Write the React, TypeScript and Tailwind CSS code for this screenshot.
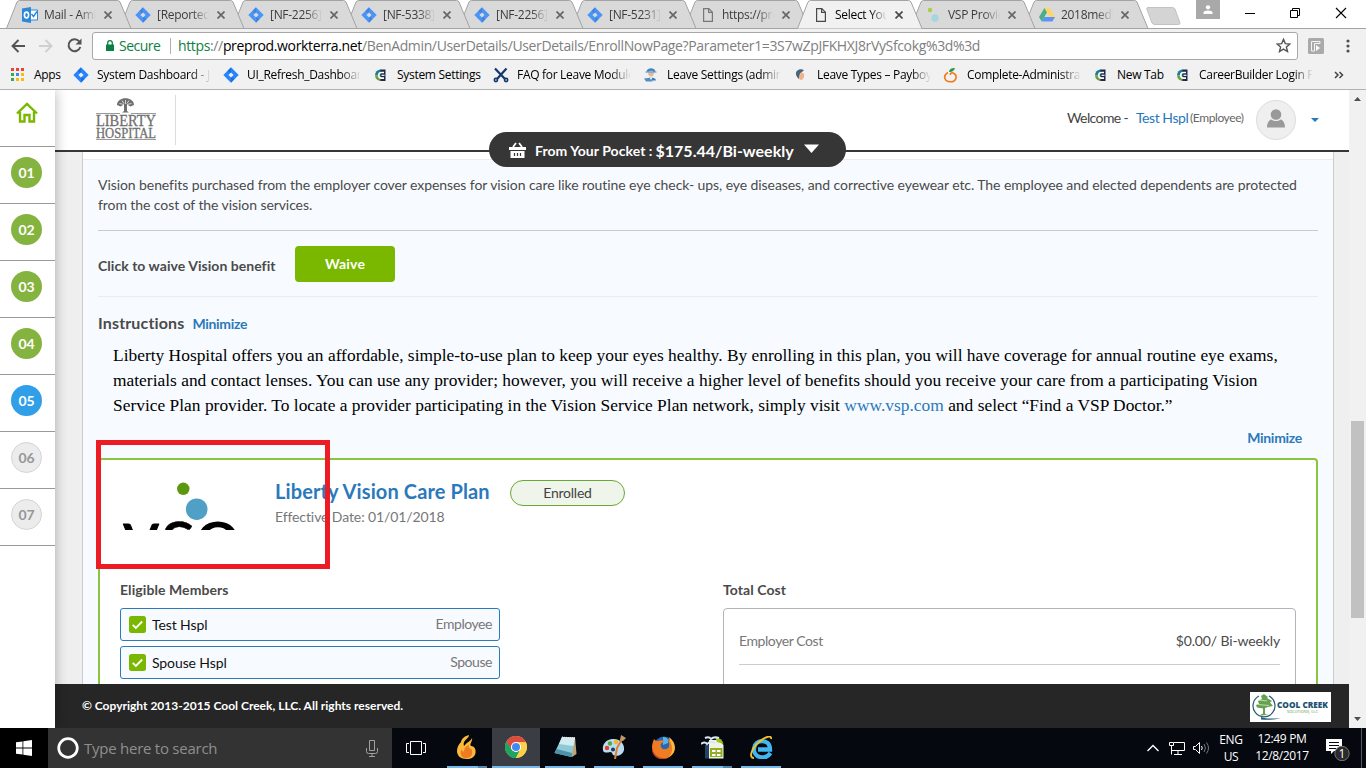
import type { ReactNode } from "react";

const uiFont = "font-['Open_Sans','Noto_Sans',sans-serif]";
const appFont = "font-['Lato',sans-serif]";

/* ---------- small icons ---------- */

const JiraIcon = ({ dim = false }: { dim?: boolean }) => (
  <svg width="16" height="16" viewBox="0 0 16 16" opacity={dim ? 0.8 : 1}>
    <path d="M8 0.3 15.7 8 8 15.7 0.3 8Z" fill="#2684ff" />
    <path d="M8 0.3 4.6 3.7 8 7.1V5Z" fill="#1558bc" opacity="0.5" />
    <path d="M8 15.7 11.4 12.3 8 9V11Z" fill="#1558bc" opacity="0.5" />
    <path d="M8 5.4 10.6 8 8 10.6 5.4 8Z" fill={dim ? "#d9d9d9" : "#f1f1f1"} />
  </svg>
);

const OutlookIcon = () => (
  <svg width="16" height="16" viewBox="0 0 16 16">
    <path d="M8 3h7.500v10H8z" fill="#fff" stroke="#2b88d8" />
    <path d="M9.500 7l2 2.500 3.500-5" stroke="#2b88d8" fill="none" strokeWidth="1.400" />
    <path d="M0 1.500 9 0v16L0 14.500Z" fill="#2b88d8" />
    <ellipse cx="4.500" cy="8" rx="2.100" ry="2.900" fill="none" stroke="#fff" strokeWidth="1.600" />
  </svg>
);

const PageIcon = ({ dim = false }: { dim?: boolean }) => (
  <svg width="16" height="16" viewBox="0 0 16 16" fill="none" stroke={dim ? "#777" : "#4a4a4a"} strokeWidth="1.200">
    <path d="M3.600 1.600h5.200l3.600 3.600v9.200H3.600z" />
    <path d="M8.600 1.800v3.600h3.600" />
  </svg>
);

const VspIcon = () => (
  <svg width="16" height="16" viewBox="0 0 16 16">
    <circle cx="4" cy="3" r="2.200" fill="#a5cf4c" />
    <circle cx="9" cy="11" r="3.700" fill="#a5d6de" />
  </svg>
);

const DriveIcon = () => (
  <svg width="16" height="16" viewBox="0 0 16 16">
    <path d="M5.400 1h5.200L16 10h-5.200Z" fill="#fdd663" />
    <path d="M5.400 1 8 5.400 2.700 14.600 0 10Z" fill="#4caf84" />
    <path d="M5.300 10H16l-2.600 4.600H2.700Z" fill="#5c93f5" />
  </svg>
);

const CbIcon = () => (
  <svg width="16" height="16" viewBox="0 0 16 16">
    <path d="M7 2.500h5.500v11.500H7z" fill="#1b2a49" />
    <path d="M7.500 2.500a5.800 5.800 0 0 0-5.500 6h5.500Z" fill="#1d7f94" />
    <path d="M2 8.500a5.800 5.800 0 0 0 5.500 5.500V8.500Z" fill="#6f9f45" />
    <path d="M11 5.500H8.500a2.800 2.800 0 0 0 0 5.600H11" fill="none" stroke="#fff" strokeWidth="1.600" />
    <path d="M8.500 8.300h3" stroke="#fff" strokeWidth="1.200" />
  </svg>
);

const ScissorsIcon = () => (
  <svg width="16" height="16" viewBox="0 0 16 16" stroke="#14386b" fill="none" strokeWidth="2.200">
    <path d="M2 1.500 12 12M13.500 1.500 4 12" />
    <circle cx="2.900" cy="13" r="1.600" strokeWidth="1.600" />
    <circle cx="13.100" cy="13" r="1.600" strokeWidth="1.600" />
  </svg>
);

const WorkerIcon = () => (
  <svg width="16" height="16" viewBox="0 0 16 16">
    <path d="M3.500 5c0-5 9-5 9 0Z" fill="#4187c7" />
    <circle cx="8" cy="6.600" r="2.800" fill="#e9b98d" />
    <path d="M2.500 4.500h11v1.200h-11z" fill="#6aa6da" />
    <path d="M3 13.500c0-4 10-4 10 0Z" fill="#3c7bb8" />
    <path d="M1 11.500 6 11l4 3.500H3Z" fill="#4f8fc9" />
    <path d="M6.500 10.500h3L8 13Z" fill="#fff" />
  </svg>
);

const PayIcon = () => (
  <svg width="16" height="16" viewBox="0 0 16 16">
    <path d="M11 3C6 1 2.500 4 3 7.500 3.500 10 5 11 6 12l1-5Z" fill="#47657b" />
    <path d="M7 6c3-1 5 1 4 4s-3 4-5 2Z" fill="#f0b48c" />
  </svg>
);

const OrangeIcon = () => (
  <svg width="16" height="16" viewBox="0 0 16 16" fill="none">
    <path d="M5 5.500C-1 9 2 15 7.500 14.800 13 15 15 9 11 6.500 9 5 7 6 7.500 8" stroke="#f07a1a" strokeWidth="1.600" />
    <path d="M6 5c0-3 3-4.500 6-4-1 3-3 4.500-6 4Z" fill="#2c9a4b" />
  </svg>
);

const CloseX = ({ active }: { active?: boolean }) => (
  <svg width="8" height="8" viewBox="0 0 8 8" stroke={active ? "#4a4a4a" : "#666"} strokeWidth="1.700">
    <path d="M0.500 0.500 7.500 7.500M7.500 0.500 0.500 7.500" />
  </svg>
);

/* ---------- browser chrome ---------- */

interface TabItem {
  title: string;
  icon: ReactNode;
  active?: boolean;
}

const tabs: TabItem[] = [
  { title: "Mail - Amit", icon: <OutlookIcon /> },
  { title: "[Reported", icon: <JiraIcon dim /> },
  { title: "[NF-2256]", icon: <JiraIcon dim /> },
  { title: "[NF-5338]", icon: <JiraIcon dim /> },
  { title: "[NF-2256]", icon: <JiraIcon dim /> },
  { title: "[NF-5231]", icon: <JiraIcon dim /> },
  { title: "https://pre", icon: <PageIcon dim /> },
  { title: "Select You", icon: <PageIcon />, active: true },
  { title: "VSP Provid", icon: <VspIcon /> },
  { title: "2018medi", icon: <DriveIcon /> },
];

const BrowserTab = ({ tab, index }: { tab: TabItem; index: number }) => (
  <div
    className="relative -ml-3 flex h-[29px] w-[125px] shrink-0 items-center pl-4 first:ml-0"
    style={{ zIndex: tab.active ? 20 : 12 - index }}
  >
    <svg className="absolute top-0 left-0" width="126" height="29" viewBox="0 0 126 29">
      <path
        d="M0.500 28.500 11 2Q12 0.500 13.500 0.500H111.500Q113 0.500 114 2L125 28.500"
        fill={tab.active ? "#f1f1f1" : "#d9d9d9"}
        stroke="#a3a3a3"
      />
      {!tab.active && <path d="M0 28.500H126" stroke="#a3a3a3" />}
    </svg>
    <span className="relative flex w-4">{tab.icon}</span>
    <span
      className={`relative ml-1.5 w-[52px] overflow-hidden text-[12px] tracking-[-0.3px] whitespace-nowrap [mask-image:linear-gradient(to_right,#000_68%,transparent)] ${tab.active ? "text-black" : "text-[#3c3c3c]"}`}
    >
      {tab.title}
    </span>
    <span className="relative ml-2">
      <CloseX active={tab.active} />
    </span>
  </div>
);

const TabStrip = () => (
  <div className="flex h-[29px] border-b border-[#a3a3a3] bg-white pl-1.5">
    {tabs.map((tab, i) => (
      <BrowserTab key={i} tab={tab} index={i} />
    ))}
    <svg className="mt-[7px] -ml-0.5" width="35" height="18" viewBox="0 0 35 18">
      <path d="M2 0.500H26Q28 0.500 29 2L34 16Q34 17.500 32.500 17.500H9Q7 17.500 6 16L0.800 2Q0.500 0.500 2 0.500Z" fill="#d4d4d4" stroke="#c2c2c2" />
    </svg>
    <div className="ml-auto flex">
      <div className="flex h-[19px] w-6 items-center justify-center bg-[#a9a9a9]">
        <svg width="10" height="10" viewBox="0 0 10 10" fill="#fff">
          <circle cx="5" cy="2.300" r="2.100" />
          <path d="M0.500 9V7.500C0.500 4.700 9.500 4.700 9.500 7.500V9Z" />
        </svg>
      </div>
      <svg className="ml-[25px]" width="121" height="27" viewBox="0 0 121 27" fill="none" stroke="#000">
        <path d="M0 13.500H10" />
        <path d="M45.500 10.500h7v7h-7zM47.500 10.500v-2h7v7h-2" />
        <path d="M91 8 101 18M101 8 91 18" strokeWidth="1.100" />
      </svg>
    </div>
  </div>
);

const AddressBar = () => (
  <div className="flex h-[33px] items-center pr-3.5 pl-[11px]">
    <svg width="14" height="14" viewBox="0 0 14 14" fill="none" stroke="#545454" strokeWidth="1.900">
      <path d="M14 7H1.500M7.500 1 1.500 7l6 6" />
    </svg>
    <svg className="ml-3.5" width="14" height="14" viewBox="0 0 14 14" fill="none" stroke="#cfcfcf" strokeWidth="1.900">
      <path d="M0 7H12.500M6.500 1l6 6-6 6" />
    </svg>
    <svg className="ml-3.5" width="15" height="15" viewBox="0 0 15 15" fill="none">
      <path d="M12.300 3.500A6 6 0 1 0 13.300 9" stroke="#545454" strokeWidth="2" />
      <path d="M14.500 0.500v6h-6Z" fill="#545454" />
    </svg>
    <div className="ml-2.5 flex h-7 w-[1206px] items-center rounded-[3px] border border-[#a8a8a8] bg-white pr-1.5 pl-[13px] text-[14px]">
      <svg className="shrink-0" width="8" height="11" viewBox="0 0 8 11">
        <path d="M0 4.500h8V11H0z" fill="#0b8043" />
        <path d="M1.700 5V3a2.300 2.300 0 0 1 4.600 0v2" fill="none" stroke="#0b8043" strokeWidth="1.300" />
      </svg>
      <span className="ml-[5px] w-[51px] pb-px tracking-[-0.5px] text-[#0b8043]">Secure</span>
      <span className="h-4 w-px bg-[#b0b0b0]" />
      <span className="ml-[7px] pb-px tracking-[-0.36px] whitespace-nowrap text-[#808080]">
        <span className="text-[#0b8043]">https</span>://<span className="text-black">preprod.workterra.net</span>
        /BenAdmin/UserDetails/UserDetails/EnrollNowPage?Parameter1=3S7wZpJFKHXJ8rVySfcokg%3d%3d
      </span>
      <svg className="ml-auto" width="15" height="15" viewBox="0 0 15 15" fill="none" stroke="#555" strokeWidth="1.400">
        <path d="M7.500 1.300 9.300 5.600 13.900 6 10.400 9 11.500 13.500 7.500 11.100 3.500 13.500 4.600 9 1.100 6 5.700 5.600Z" />
      </svg>
    </div>
    <svg className="ml-2.5" width="16" height="16" viewBox="0 0 16 16">
      <rect width="16" height="16" rx="1.500" fill="#aaa" />
      <path d="M3.500 13V3.500H12v2H6.500V13Z" fill="none" stroke="#f4f4f4" />
      <path d="m8 7 4 3-4 3Z" fill="#fff" />
    </svg>
    <svg className="ml-[22px]" width="4" height="14" viewBox="0 0 4 14" fill="#505050">
      <circle cx="2" cy="2" r="1.600" />
      <circle cx="2" cy="7" r="1.600" />
      <circle cx="2" cy="12" r="1.600" />
    </svg>
  </div>
);

const bookmarks: { label: string; icon: ReactNode; width: string; fade?: boolean }[] = [
  { label: "System Dashboard - JI", icon: <JiraIcon />, width: "w-[150px]", fade: true },
  { label: "UI_Refresh_Dashboard", icon: <JiraIcon />, width: "w-[150px]", fade: true },
  { label: "System Settings", icon: <CbIcon />, width: "w-[120px]" },
  { label: "FAQ for Leave Module", icon: <ScissorsIcon />, width: "w-[150px]", fade: true },
  { label: "Leave Settings (admin", icon: <WorkerIcon />, width: "w-[150px]", fade: true },
  { label: "Leave Types – Payboy", icon: <PayIcon />, width: "w-[150px]", fade: true },
  { label: "Complete-Administrat", icon: <OrangeIcon />, width: "w-[150px]", fade: true },
  { label: "New Tab", icon: <CbIcon />, width: "w-[82px]" },
  { label: "CareerBuilder Login Pa", icon: <CbIcon />, width: "w-[150px]", fade: true },
];

const appDots = ["#ea4335", "#ea4335", "#ea4335", "#34a853", "#4285f4", "#fbbc05", "#34a853", "#fbbc05", "#fbbc05"];

const BookmarksBar = () => (
  <div className="flex h-7 items-center border-b border-[#b2b2b2] pb-0.5 pl-[11px] text-[12px]">
    <svg width="13" height="13" viewBox="0 0 13 13">
      {appDots.map((c, i) => (
        <rect key={i} x={(i % 3) * 5} y={Math.floor(i / 3) * 5} width="3" height="3" fill={c} />
      ))}
    </svg>
    <span className="ml-2.5 w-[39px] tracking-[-0.3px]">Apps</span>
    {bookmarks.map((b, i) => (
      <div key={i} className={`flex shrink-0 items-center gap-2 ${b.width}`}>
        <span className="w-4 shrink-0">{b.icon}</span>
        <span
          className={`overflow-hidden tracking-[-0.3px] whitespace-nowrap ${b.fade ? "w-[114px] [mask-image:linear-gradient(to_right,#000_82%,transparent)]" : ""}`}
        >
          {b.label}
        </span>
      </div>
    ))}
    <svg className="ml-[9px]" width="10" height="8" viewBox="0 0 10 8" fill="none" stroke="#444" strokeWidth="1.500">
      <path d="m1 1 3 3-3 3M5.500 1l3 3-3 3" />
    </svg>
  </div>
);

/* ---------- application ---------- */

const steps = [
  { n: "01", style: "bg-[#85b340] text-white" },
  { n: "02", style: "bg-[#85b340] text-white" },
  { n: "03", style: "bg-[#85b340] text-white" },
  { n: "04", style: "bg-[#85b340] text-white" },
  { n: "05", style: "bg-[#319fe8] text-white" },
  { n: "06", style: "border border-[#d4d4d4] bg-[#ececec] text-[#979797]" },
  { n: "07", style: "border border-[#d4d4d4] bg-[#ececec] text-[#979797]" },
];

const Sidebar = () => (
  <nav className="relative z-10 w-[55px] shrink-0 bg-white shadow-[0_0_12px_rgba(0,0,0,0.3)]">
    <div className="flex h-[57px] justify-center border-b border-[#999] pt-3 pr-0.5">
      <svg width="22" height="21" viewBox="0 0 22 21" fill="none" stroke="#7ab800" strokeWidth="2.400">
        <path d="M1 11.500 11 1.800 21 11.500" />
        <path d="M4 9.500V19.500h4.500v-6.500h5v6.500H18V9.500" />
      </svg>
    </div>
    {steps.map((s) => (
      <div key={s.n} className="h-[57px] border-b border-[#999] pt-2.5 pl-[11px]">
        <div className={`flex size-[31px] items-center justify-center rounded-full text-[14px] font-bold ${s.style}`}>{s.n}</div>
      </div>
    ))}
  </nav>
);

const HospitalLogo = () => (
  <svg width="62" height="46" viewBox="0 0 62 46">
    <path d="M22 8C22-1 39-1 39 8l-3.500 1.500-3.500-2v6.500l2 1.500h-7l2-1.500V7.500l-3.500 2Z" fill="#6f6f6f" />
    <path d="M24.500 6.500l4.500 1M36.500 6.500l-4.500 1M30.500 3v4M27 3.500l2 3M34 3.500l-2 3" stroke="#fff" strokeWidth="0.700" />
    <path d="M1 16.500H25M36 16.500H61M1 42.500H61" stroke="#9a9a9a" />
    <g fill="#707070" stroke="#707070" strokeWidth="0.300" fontFamily="'Liberation Serif', serif">
      <text x="1" y="29.300" fontSize="16" textLength="60" lengthAdjust="spacingAndGlyphs">LIBERTY</text>
      <text x="1" y="40.800" fontSize="14.500" textLength="60" lengthAdjust="spacingAndGlyphs">HOSPITAL</text>
    </g>
  </svg>
);

const PocketPill = () => (
  <div className="absolute top-[42px] left-[434px] flex h-[35px] w-[357px] items-center rounded-[18px] bg-[#363636] pl-5 font-bold text-white">
    <svg width="17" height="16" viewBox="0 0 17 16" fill="#fff">
      <path d="M0 5h17v3H0zM1.500 9h14v7h-14z" />
      <path d="M4 5 7 1M13 5l-3-4" stroke="#fff" strokeWidth="1.800" />
      <path d="M5.500 11v3M8.500 11v3M11.500 11v3" stroke="#363636" strokeWidth="1.200" />
    </svg>
    <span className="ml-[9px] pt-0.5 text-[14px] tracking-[0.05px]">From Your Pocket :</span>
    <span className="ml-[3px] pt-0.5 text-[16px]">$175.44/Bi-weekly</span>
    <svg className="mb-0.5 ml-2.5" width="15" height="9" viewBox="0 0 15 9" fill="#fff">
      <path d="M0 0.500H15L7.500 9Z" />
    </svg>
  </div>
);

const AppHeader = () => (
  <header className="relative flex h-[62px] shrink-0 items-start border-b-2 border-[#363636] bg-white pl-10">
    <div className="mt-[5px] flex h-[50px] w-[81px] border-r border-[#dcdcdc] pt-0.5">
      <HospitalLogo />
    </div>
    <div className="mt-2.5 mr-[30px] ml-auto flex h-10 items-center text-[14px]">
      <span className="w-[61px] pb-1.5 tracking-[-0.6px] whitespace-nowrap text-[#444]">Welcome -</span>
      <span className="ml-2 w-[52px] pb-1.5 tracking-[-0.45px] whitespace-nowrap text-[#2878bc]">Test Hspl</span>
      <span className="ml-0.5 w-[54px] pb-1 text-[12px] tracking-[-0.4px] text-[#666]">(Employee)</span>
      <span className="ml-3 flex size-10 justify-center rounded-full border border-[#dcdcdc] bg-[#efefef] pt-2">
        <svg width="18" height="19" viewBox="0 0 18 19" fill="#999">
          <circle cx="9" cy="5.500" r="5.300" />
          <path d="M0 18.500C0 13 3 10.500 4.500 10.500 7 12.500 11 12.500 13.500 10.500 15 10.500 18 13 18 18.500Z" />
        </svg>
      </span>
      <svg className="ml-[15px]" width="8" height="4" viewBox="0 0 8 4" fill="#2878bc">
        <path d="M0 0H8L4 4Z" />
      </svg>
    </div>
    <PocketPill />
  </header>
);

const VspLogo = () => (
  <svg width="120" height="50" viewBox="0 0 120 50" className="overflow-hidden">
    <circle cx="63.300" cy="8.800" r="6.200" fill="#5d960f" />
    <circle cx="76.700" cy="29.200" r="10.800" fill="#4f9fc6" />
    <g fill="#000" fontFamily="Lato, sans-serif">
      <text x="2.500" y="79.500" fontSize="72" stroke="#000" strokeLinejoin="round">v</text>
      <text x="41" y="82" fontSize="80" stroke="#000" strokeWidth="0.500">s</text>
      <text x="74" y="84" fontSize="84">o</text>
    </g>
  </svg>
);

const members = [
  { name: "Test Hspl", relation: "Employee" },
  { name: "Spouse Hspl", relation: "Spouse" },
];

const PlanCard = () => (
  <section className="relative h-[400px] rounded-[4px] border-2 border-[#8ac440] bg-white px-5 pt-5">
    {/* highlight box */}
    <div className="absolute -top-5 -left-1 h-[129px] w-[234px] border-5 border-[#ed1c24]" />
    <div className="flex h-[98px]">
      <VspLogo />
      <div className="ml-9">
        <div className="flex h-[26px] items-center">
          <h2 className="-ml-px w-[215px] pb-1 text-[20px] leading-[22px] font-bold tracking-[0.12px] whitespace-nowrap text-[#2b79bb]">Liberty Vision Care Plan</h2>
          <span className="ml-5 flex h-[26px] w-[115px] items-center justify-center rounded-full border border-[#6aa834] bg-[#eff5eb] pb-px text-[14px] tracking-[-0.25px] text-[#444]">
            Enrolled
          </span>
        </div>
        <p className="mt-px -ml-px text-[14px] leading-5 tracking-[-0.1px] text-[#777]">Effective Date: 01/01/2018</p>
      </div>
    </div>
    <div className="flex">
      <div className="w-[380px]">
        <h3 className="mt-0.5 mb-2 text-[14px] leading-5 font-bold tracking-[0.08px] text-[#4a4a4a]">Eligible Members</h3>
        <div className="flex flex-col gap-[5px]">
          {members.map((m) => (
            <div key={m.name} className="flex h-[33px] items-center rounded-[3px] border border-[#2b7bbb] bg-[#f7fbff] pr-[7px] pl-2 text-[14px]">
              <svg width="17" height="17" viewBox="0 0 17 17">
                <rect width="17" height="17" rx="2.500" fill="#7ab800" />
                <path d="m3.700 8.800 3.200 3.200 6.300-6.500" fill="none" stroke="#fff" strokeWidth="1.800" />
              </svg>
              <span className="ml-1.5 pb-px tracking-[-0.1px] text-[#111]">{m.name}</span>
              <span className="ml-auto pb-[3px] tracking-[-0.45px] text-[#777]">{m.relation}</span>
            </div>
          ))}
        </div>
      </div>
      <div className="ml-[223px] w-[573px]">
        <h3 className="mt-0.5 mb-2 text-[14px] leading-5 font-bold tracking-[0.08px] text-[#4a4a4a]">Total Cost</h3>
        <div className="h-[200px] rounded-[4px] border border-[#b0b5ba] px-[15px] pt-[22px]">
          <div className="flex justify-between border-b border-[#ccc] pb-[13px] text-[14px] leading-5">
            <span className="tracking-[-0.42px] text-[#777]">Employer Cost</span>
            <span className="tracking-[-0.14px] text-[#4a4a4a]">$0.00/ Bi-weekly</span>
          </div>
        </div>
      </div>
    </div>
  </section>
);

const MainPanel = () => (
  <main className="flex-1 overflow-hidden bg-[#efefef] pl-[27px]">
    <div className="h-full w-[1252px] border-x border-[#ccc] bg-[#f7fbff]">
      <div className="h-2 border-b border-[#e9edf0] bg-white" />
      <div className="px-[15px] pt-[15px]">
        <p className="pb-[15px] text-[14px] leading-5 tracking-[-0.077px] whitespace-nowrap text-[#4a4a4a]">
          Vision benefits purchased from the employer cover expenses for vision care like routine eye check- ups, eye diseases, and corrective eyewear etc. The employee and elected dependents are protected
          <br />
          from the cost of the vision services.
        </p>
        <div className="flex items-center border-y border-t-[#ccc] border-b-[#e9edf0] pt-[15px] pb-3.5">
          <span className="w-[197px] pt-0.5 text-[14px] font-bold tracking-[0.04px] text-[#4a4a4a]">Click to waive Vision benefit</span>
          <button className="h-9 w-[100px] rounded-[4px] bg-[#7ab800] pb-0.5 text-[14px] font-bold tracking-[0.2px] text-white">Waive</button>
        </div>
        <div className="flex items-baseline pt-3.5">
          <h3 className="text-[16px] leading-6 font-bold tracking-[0.15px] text-[#4a4a4a]">Instructions</h3>
          <a className="ml-2 text-[14px] font-bold tracking-[-0.3px] text-[#2b79bb]">Minimize</a>
        </div>
        <div className="pt-2 pl-[15px] font-['Liberation_Serif',serif] text-[17.4px] leading-[25px] tracking-[0.01px] whitespace-nowrap text-black">
          <p>Liberty Hospital offers you an affordable, simple-to-use plan to keep your eyes healthy. By enrolling in this plan, you will have coverage for annual routine eye exams,</p>
          <p>materials and contact lenses. You can use any provider; however, you will receive a higher level of benefits should you receive your care from a participating Vision</p>
          <p>
            Service Plan provider. To locate a provider participating in the Vision Service Plan network, simply visit <a className="text-[#2b79bb]">www.vsp.com</a> and select “Find a VSP Doctor.”
          </p>
        </div>
        <div className="mt-2.5 mb-2.5 pr-4 text-right text-[14px] leading-5 font-bold tracking-[-0.3px] text-[#2b79bb]">Minimize</div>
        <PlanCard />
      </div>
    </div>
  </main>
);

const AppFooter = () => (
  <footer className="flex h-11 shrink-0 items-center justify-between bg-[#262626] pr-[18px] pl-[27px] text-white">
    <span className="text-[12px] font-bold">© Copyright 2013-2015 Cool Creek, LLC. All rights reserved.</span>
    <div className="mt-0.5 flex h-[30px] w-[81px] items-center bg-white">
      <svg width="81" height="30" viewBox="0 0 81 30">
        <path d="M19 4A11 11 0 1 1 9 4" fill="none" stroke="#285a78" strokeWidth="1.200" />
        <path d="m14 2 4 3-1 1 5 3-2 1.500 3 3.500-5 1-3 1v6l3 1-9 .500 4-2v-5l-6-1-1-2.500 3-1-1-3 4-2-1-3Z" fill="#65a150" />
        <path d="m9 8 8 1M8 12.500l11 1" stroke="#d7ead0" strokeWidth="0.800" />
        <path d="M11 25q6 2.500 20 1-9 2.500-20 1.500Z" fill="#285a78" />
        <text x="27" y="15.500" fontFamily="'Open Sans', sans-serif" fontWeight="800" fontSize="8.500" fill="#215273" textLength="51" lengthAdjust="spacingAndGlyphs">COOL CREEK</text>
        <text x="37" y="21" fontFamily="'Open Sans', sans-serif" fontWeight="600" fontSize="4" fill="#8bb678" textLength="31">SOLUTIONS, LLC</text>
      </svg>
    </div>
  </footer>
);

const Scrollbar = () => (
  <div className="flex w-[17px] shrink-0 flex-col items-center bg-[#f1f1f1]">
    <svg className="mt-[7px]" width="7" height="4" viewBox="0 0 7 4" fill="#505050">
      <path d="M0 4H7L3.500 0Z" />
    </svg>
    <div className="mt-80 h-[197px] w-[13px] bg-[#c1c1c1]" />
    <svg className="mt-auto mb-[7px]" width="7" height="4" viewBox="0 0 7 4" fill="#505050">
      <path d="M0 0H7L3.500 4Z" />
    </svg>
  </div>
);

/* ---------- taskbar ---------- */

const FlameIcon = () => (
  <svg width="22" height="24" viewBox="0 0 22 24">
    <path d="M13 0C13 4 6 5 8 11 11 7 15 6 16 3c1 3-3 6-1 8 4 0 5 4 4.500 7-1 4-4 6-9 6C5 24 1 21 1 16 1 12 3 9 5 7 6 3 9 1 13 0Z" fill="#fdb93a" />
    <path d="M13 10c-1 3 1 3 3 5 1 6-2 8-6 8-5 0-7-5-4-9 0 3 1 3 2 2 0-3 2-5 5-6Z" fill="#ef7c23" />
  </svg>
);

const ChromeIcon = () => (
  <svg width="22" height="22" viewBox="0 0 22 22">
    <circle cx="11" cy="11" r="11" fill="#fbd04b" />
    <path d="M11 11 6.200 13.800 1.470 5.500A11 11 0 0 1 20.530 5.500L20.900 6.300H11Z" fill="#dd4b3e" />
    <path d="M1.470 5.500 6.600 13.600 11 16.200 15 14 11.200 22A11 11 0 0 1 1.470 5.500Z" fill="#1da362" />
    <path d="m15.400 13.600-4.600 8.400h.2A11 11 0 0 0 20.900 6.300H11Z" fill="#fbd04b" />
    <circle cx="11" cy="11" r="5.100" fill="#fff" />
    <circle cx="11" cy="11" r="4" fill="#4688f1" />
  </svg>
);

const NotepadIcon = () => (
  <svg width="23" height="22" viewBox="0 0 23 22">
    <path d="M8 1 21 1l1.500 17-4.500 3Z" fill="#bda57a" />
    <path d="M8 1 21 2 17.500 21 0.500 17Z" fill="#8ec9d8" />
    <path d="M8 1 21 2 19.500 10 5 8Z" fill="#d2edf2" />
    <path d="M0.500 17 17.500 21l.5-4L2.500 13Z" fill="#4b93a5" />
    <path d="M8 1.500 21 2.500" stroke="#e8e8e8" strokeWidth="2" strokeDasharray="1 1" />
  </svg>
);

const PaintIcon = () => (
  <svg width="24" height="24" viewBox="0 0 24 24">
    <path d="M10 4C18 3 23 9 22 15c-1 5-7 7-11 5-1-2-1-3-3-3-3 1-7 1-7-2C0 9 4 5 10 4Z" fill="#b9dcf2" />
    <circle cx="5" cy="13" r="2.200" fill="#de3d32" />
    <circle cx="8" cy="8.500" r="2.200" fill="#51a744" />
    <circle cx="14" cy="7" r="2.300" fill="#f1b52e" />
    <circle cx="11" cy="14.500" r="2" fill="#1c3b5a" />
    <path d="m13 24 2-11 5-9" stroke="#d98332" strokeWidth="2" fill="none" />
    <path d="m18 5 1-5 5 3-3 3Z" fill="#c2976b" />
  </svg>
);

const FirefoxIcon = () => (
  <svg width="23" height="23" viewBox="0 0 23 23">
    <circle cx="12" cy="10.500" r="10" fill="#2568b4" />
    <path d="M11 1c4 0 6 3 5 6l-5 2Z" fill="#5bb3e4" />
    <path d="M2 3c1 1 2 2 4 2 2-1 5-1 6 1-3 1-4 2-3 5 2 4 7 2 8 0 1-4-1-6-1-8 5 3 7 8 6 12-2 5-6 8-11 8C3 23 0 17 0 11c0-3 1-5 2-8Z" fill="#ef7b22" />
    <path d="M17 1c8 6 8 16 0 20 4-5 4-10 1-16Z" fill="#f9b93b" />
    <path d="M0 11c1 8 7 12 14 11C5 26-1 18 0 11Z" fill="#c73a25" />
  </svg>
);

const OfficeIcon = () => (
  <svg width="23" height="23" viewBox="0 0 23 23">
    <path d="M4 9h5v13.500H4z" fill="#234563" />
    <path d="M8 4h10l4.500 5v13.500H8z" fill="#eef3e4" />
    <path d="M14 1.500q7 0 8.500 6.500L16 6Z" fill="#9bc21d" />
    <path d="M9 12h12.500v9H9z" fill="#94ad22" />
    <path d="M11 14h3.500v2H11zM16 14h3.500v2H16zM11 18h3.500v2H11zM16 18h3.500v2H16z" fill="#fff" />
    <path d="M0 8q4-3 6 0 4-4 8-1M4 2q4-2 6 1 3-3 8-1" stroke="#dce9f4" strokeWidth="2" fill="none" />
  </svg>
);

const ExplorerIcon = () => (
  <svg width="23" height="23" viewBox="0 0 23 23" fill="none">
    <path d="M20.500 17C15 25 3 21 4 12.500 5 3 20 2 20 13.500H8" stroke="#42b7ef" strokeWidth="4.300" />
    <path d="M4 22C-2 22 2 12 9 6S22-1 21 3" stroke="#f2c02c" strokeWidth="1.900" />
  </svg>
);

const taskApps = [
  { id: "flame", icon: <FlameIcon />, stacked: true },
  { id: "chrome", icon: <ChromeIcon />, current: true },
  { id: "notepad", icon: <NotepadIcon /> },
  { id: "paint", icon: <PaintIcon /> },
  { id: "firefox", icon: <FirefoxIcon /> },
  { id: "office", icon: <OfficeIcon />, stacked: true },
  { id: "ie", icon: <ExplorerIcon /> },
];

const Taskbar = () => (
  <div className="flex h-10 bg-[#05080f] text-white">
    <div className="flex w-12 items-center justify-center bg-black">
      <svg width="16" height="16" viewBox="0 0 16 16" fill="#fff">
        <path d="M0 2.300 6.500 1.400v6.200H0zM7.300 1.300 16 0v7.600H7.300zM0 8.400h6.500v6.200L0 13.700zM7.300 8.400H16V16l-8.700-1.300z" />
      </svg>
    </div>
    <div className="flex w-[344px] items-center bg-[#333] pr-3.5 pl-[9px]">
      <svg width="22" height="22" viewBox="0 0 22 22" fill="none" stroke="#fff">
        <circle cx="11" cy="11" r="9.300" strokeWidth="2.700" />
      </svg>
      <span className="ml-[5px] text-[15px] tracking-[-0.25px] text-[#8f8f8f]">Type here to search</span>
      <svg className="ml-auto" width="12" height="17" viewBox="0 0 12 17" fill="none" stroke="#a0a0a0">
        <path d="M3.500 0.500h5v10h-5zM0.500 8v3.500q0 2 2 2h7q2 0 2-2V8M6 13.500v3M3 16.500h6" />
      </svg>
    </div>
    <div className="flex w-[50px] items-center justify-center pr-0.5">
      <svg width="20" height="14" viewBox="0 0 20 14" fill="none" stroke="#fff">
        <path d="M4.500 0.500h11v13h-11zM3 2.500H0.500v9H3M17 2.500h2.500v9H17" />
      </svg>
    </div>
    <div className="flex gap-px pl-px">
      {taskApps.map((app) => (
        <div key={app.id} className={`flex h-10 w-12 flex-col items-center ${app.current ? "bg-[#3a3d43]" : ""}`}>
          <div className="flex h-[38px] items-center">{app.icon}</div>
          <div className={`flex h-0.5 justify-end bg-[#76b9ed] ${app.current ? "w-12" : "w-10"}`}>
            {app.stacked && <div className="w-[9px] bg-[#5487b0]" />}
          </div>
        </div>
      ))}
    </div>
    <div className="ml-auto flex items-center text-[12px] leading-[17px]">
      <svg width="12" height="8" viewBox="0 0 12 8" fill="none" stroke="#fff" strokeWidth="1.400">
        <path d="M0.500 7 6 1.500 11.500 7" />
      </svg>
      <svg className="ml-2.5" width="16" height="14" viewBox="0 0 16 14" fill="none" stroke="#fff">
        <path d="M5 1.500h10.500v8H3M2.500 5v8.500M5 13.500h8M9 9.500v4M0.500 1.500h4v3h-4z" />
      </svg>
      <svg className="ml-2" width="17" height="14" viewBox="0 0 17 14" fill="none" stroke="#fff">
        <path d="M0.500 5.500h2l4-4v11l-4-4h-2zM8.500 5q1.500 2 0 4" />
        <path d="M11 3q3 4 0 8M13.500 1.500q4 5.500 0 11" stroke="#777" />
      </svg>
      <div className="ml-[9px] w-6 text-center tracking-[-0.3px]">
        <div>ENG</div>
        <div>US</div>
      </div>
      <div className="ml-3 w-[54px] pb-0.5 text-center tracking-[-0.35px] whitespace-nowrap">
        <div>12:49 PM</div>
        <div>12/8/2017</div>
      </div>
      <svg className="ml-[17px]" width="25" height="26" viewBox="0 0 25 26">
        <path d="M0 4h16v12H8l-3 3v-3H0z" fill="#fff" />
        <path d="M3 7.500h10M3 10.500h10M3 13.500h7" stroke="#05080f" />
        <circle cx="16" cy="18.500" r="7.200" fill="#2b2b2b" stroke="#777" />
        <text x="16" y="23" textAnchor="middle" fill="#fff" fontSize="12" fontFamily="'Open Sans', sans-serif">1</text>
      </svg>
      <div className="mr-1 ml-2.5 h-10 w-px bg-[#55585d]" />
    </div>
  </div>
);

export default function App() {
  return (
    <div className={`h-[783px] w-[1366px] overflow-hidden bg-white ${uiFont}`}>
      <div className="h-[90px] bg-[#f1f1f1]">
        <TabStrip />
        <AddressBar />
        <BookmarksBar />
      </div>
      <div className={`flex h-[638px] overflow-hidden ${appFont}`}>
        <Sidebar />
        <div className="flex min-w-0 flex-1 flex-col">
          <AppHeader />
          <MainPanel />
          <AppFooter />
        </div>
        <Scrollbar />
      </div>
      <Taskbar />
    </div>
  );
}
